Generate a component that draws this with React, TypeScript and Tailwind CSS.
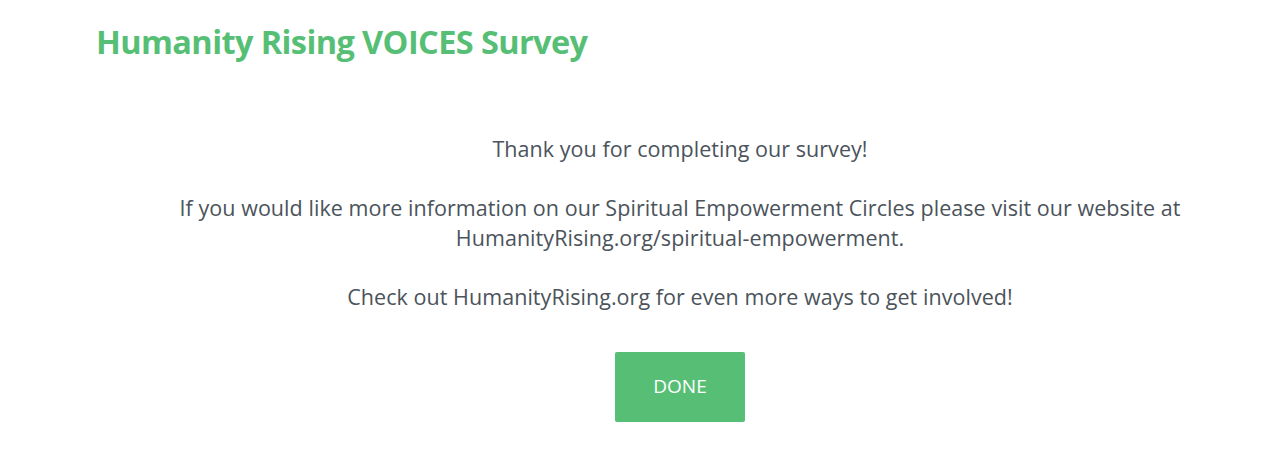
export default function App() {
  return (
    <div className="min-h-[453px] bg-white font-['Open_Sans',sans-serif]">
      <header className="pl-[96px] pt-[22px]">
        <h1 className="text-[32.5px] font-bold leading-[40px] text-[#57bf75] tracking-[-0.6px]">
          Humanity Rising VOICES Survey
        </h1>
      </header>

      <main className="ml-[96px] mr-[16px] mt-[72px] text-center text-[21.5px] leading-[29.5px] tracking-[0.05px] text-[#4b535b]">
        <p>Thank you for completing our survey!</p>
        <br />
        <p>
          If you would like more information on our Spiritual Empowerment Circles please visit our website at
          <br />
          HumanityRising.org/spiritual-empowerment.
        </p>
        <br />
        <p>Check out HumanityRising.org for even more ways to get involved!</p>

        <div className="mt-[41px] flex justify-center">
          <button className="h-[70px] w-[130px] rounded-[2px] bg-[#57bf75] text-[19px] text-white cursor-pointer">
            DONE
          </button>
        </div>
      </main>
    </div>
  );
}
